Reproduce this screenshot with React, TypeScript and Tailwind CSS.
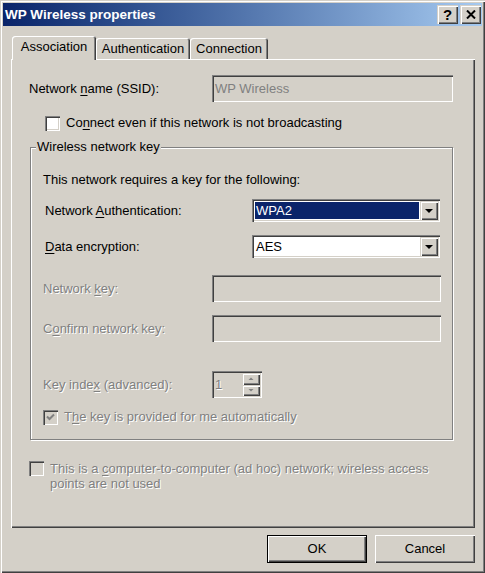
/**
 * Wireless network properties dialog (classic Windows look)
 */

import type { ReactNode } from 'react';

const sunken =
  'shadow-[inset_1px_1px_#808080,inset_2px_2px_#404040,inset_-1px_-1px_#ffffff,inset_-2px_-2px_#d4d0c8]';
const raised =
  'shadow-[inset_1px_1px_#d4d0c8,inset_2px_2px_#ffffff,inset_-1px_-1px_#404040,inset_-2px_-2px_#808080]';
const button =
  'shadow-[inset_1px_1px_#ffffff,inset_-1px_-1px_#404040,inset_-2px_-2px_#808080]';
const dim = 'text-[#808080] [text-shadow:1px_1px_0_#ffffff]';

function Key({ children }: { children: ReactNode }) {
  return <span className="underline underline-offset-[2px]">{children}</span>;
}

function Checkbox({ checked = false, disabled = false }: { checked?: boolean; disabled?: boolean }) {
  return (
    <div
      className={`w-[15px] h-[15px] shrink-0 flex items-center justify-center ${sunken} ${
        disabled ? 'bg-[#d4d0c8]' : 'bg-white'
      }`}
    >
      {checked && (
        <svg width="9" height="8" viewBox="0 0 9 8">
          <polyline points="1,3.5 3.5,6 8,1.5" fill="none" stroke="#808080" strokeWidth="2" />
        </svg>
      )}
    </div>
  );
}

function Field({ width, value }: { width: string; value?: string }) {
  return (
    <div className={`${width} h-[27px] bg-[#d4d0c8] flex items-center pl-[3px] ${sunken}`}>
      {value && <span className="text-[#808080]">{value}</span>}
    </div>
  );
}

function DropButton() {
  return (
    <div className={`w-[18px] h-[19px] bg-[#d4d0c8] flex items-center justify-center ${raised}`}>
      <svg width="8" height="4" viewBox="0 0 8 4">
        <polygon points="0,0 8,0 4,4" fill="#000" />
      </svg>
    </div>
  );
}

function Combo({ value, focused }: { value: string; focused?: boolean }) {
  return (
    <div className={`w-[188px] h-[23px] bg-white p-[2px] flex ${sunken}`}>
      <div className="flex-1 flex p-[1px]">
        <div
          className={
            focused
              ? 'flex-1 flex items-center pl-[1px] bg-[#0a246a] text-white'
              : 'flex-1 flex items-center pl-[1px]'
          }
        >
          {value}
        </div>
      </div>
      <DropButton />
    </div>
  );
}

function SpinArrow({ up }: { up?: boolean }) {
  return (
    <div className={`flex-1 bg-[#d4d0c8] flex items-center justify-center ${raised}`}>
      <svg width="6" height="4" viewBox="0 0 6 4">
        <polygon points={up ? '0.5,3 5.5,3 3,0.5' : '0.5,1 5.5,1 3,3.5'} fill="#808080" />
      </svg>
    </div>
  );
}

function Spin() {
  return (
    <div className={`w-[50px] h-[27px] bg-[#d4d0c8] p-[2px] flex ${sunken}`}>
      <div className={`flex-1 flex items-center pl-[1px] ${dim}`}>1</div>
      <div className="w-[18px] flex flex-col">
        <SpinArrow up />
        <SpinArrow />
      </div>
    </div>
  );
}

function TitleButton({ children }: { children: ReactNode }) {
  return (
    <div className={`w-[21px] h-[19px] bg-[#d4d0c8] flex items-center justify-center ${raised}`}>
      {children}
    </div>
  );
}

export default function App() {
  return (
    <div
      className={`w-[485px] h-[573px] bg-[#d4d0c8] p-[3px] font-['Liberation_Sans',Arial,sans-serif] text-[13px] leading-[16px] text-black ${raised}`}
    >
      {/* Title bar */}
      <div className="h-[23px] flex items-center justify-between pl-[2px] pr-[1px] bg-linear-to-r from-[#0a246a] to-[#a6caf0]">
        <span className="text-white font-bold text-[13.5px]">WP Wireless properties</span>
        <div className="flex gap-[2px]">
          <TitleButton>
            <span className="font-bold text-[15px] leading-none -mt-[1px]">?</span>
          </TitleButton>
          <TitleButton>
            <svg width="10" height="9" viewBox="0 0 10 9">
              <path d="M1 0.5 L9 8.5 M9 0.5 L1 8.5" stroke="#000" strokeWidth="2" />
            </svg>
          </TitleButton>
        </div>
      </div>

      {/* Tabs */}
      <div className="relative z-10 mt-[10px] ml-[9px] h-[24px] flex items-end">
        <div className="w-[84px] h-[24px] pt-[3px] flex justify-center bg-[#d4d0c8] rounded-t-[3px] shadow-[inset_1px_1px_#ffffff,inset_-1px_0_#404040,inset_-2px_0_#808080]">
          Association
        </div>
        <div className="w-[94px] h-[21px] mb-[1px] pt-[3px] flex justify-center rounded-t-[3px] shadow-[inset_1px_1px_#ffffff,inset_-1px_0_#404040,inset_-2px_0_#808080]">
          Authentication
        </div>
        <div className="w-[78px] h-[21px] mb-[1px] pt-[3px] flex justify-center rounded-t-[3px] shadow-[inset_1px_1px_#ffffff,inset_-1px_0_#404040,inset_-2px_0_#808080]">
          Connection
        </div>
      </div>

      {/* Tab panel */}
      <div className="-mt-px ml-[8px] w-[464px] h-[469px] flex flex-col shadow-[inset_1px_1px_#ffffff,inset_-1px_-1px_#404040,inset_-2px_-2px_#808080]">
        <div className="mt-[16px] ml-[18px] h-[27px] flex items-center">
          <span className="w-[183px]">
            Network <Key>n</Key>ame (SSID):
          </span>
          <Field width="w-[241px]" value="WP Wireless" />
        </div>

        <div className="mt-[13px] ml-[34px] h-[16px] flex items-center gap-[6px]">
          <Checkbox />
          <span>
            Co<Key>n</Key>nect even if this network is not broadcasting
          </span>
        </div>

        {/* Wireless network key group */}
        <div className="relative mt-[16px] ml-[19px] w-[423px] h-[293px] flex flex-col border border-[#808080] shadow-[inset_1px_1px_#ffffff,1px_1px_#ffffff]">
          <span className="absolute -top-[9px] left-[5px] px-[1px] bg-[#d4d0c8]">Wireless network key</span>

          <div className="mt-[24px] ml-[12px]">This network requires a key for the following:</div>

          <div className="mt-[11px] ml-[14px] h-[23px] flex items-center">
            <span className="w-[207px]">
              Network <Key>A</Key>uthentication:
            </span>
            <Combo value="WPA2" focused />
          </div>

          <div className="mt-[13px] ml-[14px] h-[23px] flex items-center">
            <span className="w-[207px]">
              <Key>D</Key>ata encryption:
            </span>
            <Combo value="AES" />
          </div>

          <div className="mt-[17px] ml-[12px] h-[27px] flex items-center">
            <span className={`w-[169px] ${dim}`}>
              Network <Key>k</Key>ey:
            </span>
            <Field width="w-[229px]" />
          </div>

          <div className="mt-[13px] ml-[12px] h-[27px] flex items-center">
            <span className={`w-[169px] ${dim}`}>
              C<Key>o</Key>nfirm network key:
            </span>
            <Field width="w-[229px]" />
          </div>

          <div className="mt-[29px] ml-[12px] h-[27px] flex items-center">
            <span className={`w-[169px] ${dim}`}>
              Key inde<Key>x</Key> (advanced):
            </span>
            <Spin />
          </div>

          <div className="mt-[11px] ml-[12px] h-[16px] flex items-center gap-[6px]">
            <Checkbox checked disabled />
            <span className={dim}>
              T<Key>h</Key>e key is provided for me automatically
            </span>
          </div>
        </div>

        <div className="mt-[21px] ml-[18px] flex items-start gap-[6px]">
          <Checkbox disabled />
          <div className={`w-[395px] leading-[15px] ${dim}`}>
            This is a <Key>c</Key>omputer-to-computer (ad hoc) network; wireless access points are not used
          </div>
        </div>
      </div>

      {/* Dialog buttons */}
      <div className="mt-[7px] pr-[7px] flex justify-end gap-[8px]">
        <div className="w-[100px] h-[28px] border border-black">
          <div className={`w-full h-full flex items-center justify-center ${button}`}>OK</div>
        </div>
        <div className={`w-[100px] h-[28px] flex items-center justify-center ${button}`}>Cancel</div>
      </div>
    </div>
  );
}
